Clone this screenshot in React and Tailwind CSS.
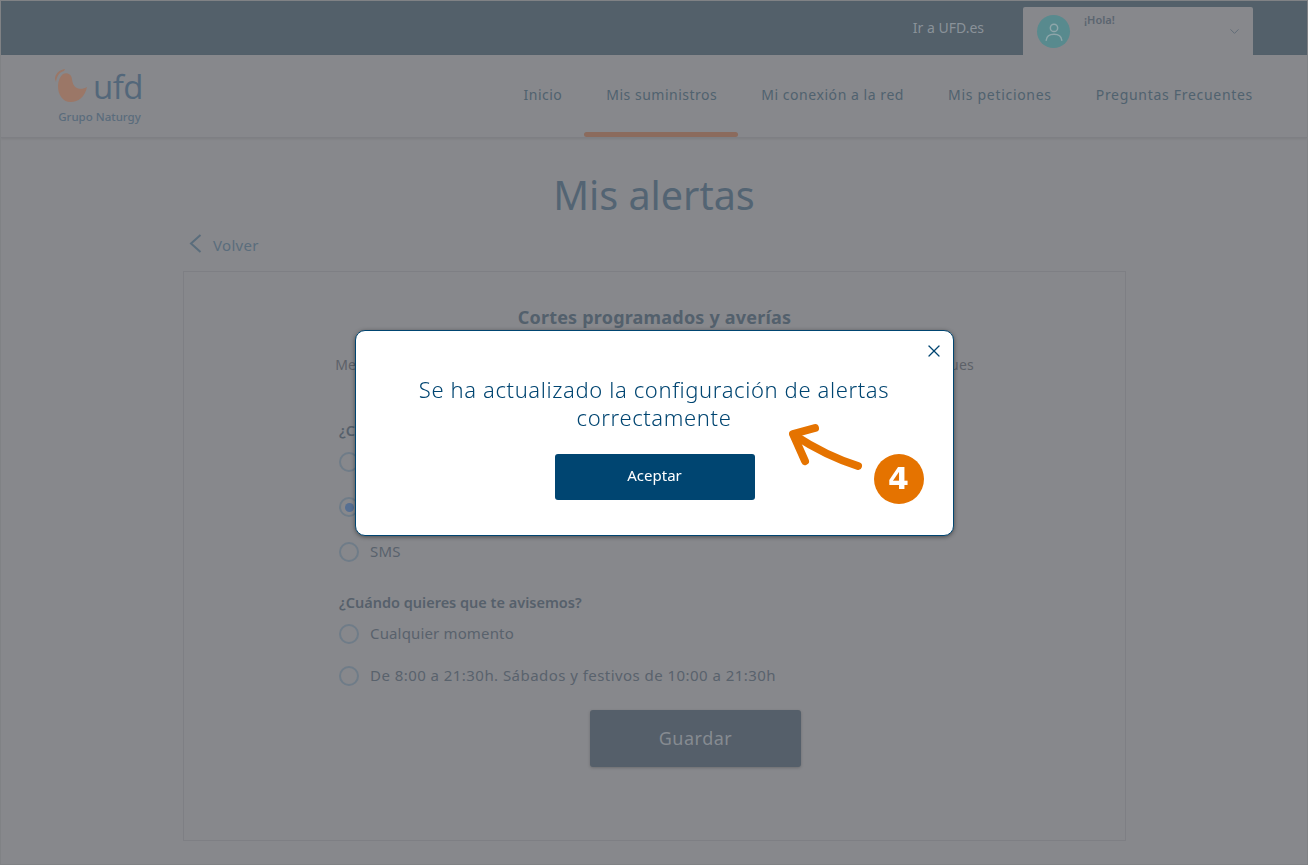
import React from 'react';
import { ChevronDown, X } from 'lucide-react';

const NAV_ITEMS = [
  { label: 'Inicio', tracking: 'tracking-[0.5px]' },
  { label: 'Mis suministros', tracking: 'tracking-[0.5px]', active: true },
  { label: 'Mi conexión a la red', tracking: 'tracking-[0.55px]' },
  { label: 'Mis peticiones', tracking: 'tracking-[0.7px]' },
  { label: 'Preguntas Frecuentes', tracking: 'tracking-[0.7px]' },
];

function Radio({ label, checked, tracking = 'tracking-[0.15px]', className = '' }) {
  return (
    <div className={`flex items-center gap-[11px] h-5 ${className}`}>
      <span className="w-5 h-5 rounded-full border-2 border-[#6f7c88] flex items-center justify-center shrink-0">
        {checked && <span className="w-[9px] h-[9px] rounded-full bg-[#566f92]" />}
      </span>
      <span className={`text-[15px] pb-[2px] text-[#59626c] ${tracking}`}>{label}</span>
    </div>
  );
}

function Logo() {
  return (
    <div className="w-[90px] flex flex-col items-center">
      <div className="flex items-center h-[38px] w-[90px]">
        <svg width="38" height="38" viewBox="0 0 38 38" className="shrink-0">
          <path d="M9 6 C12 4.500 16 5 17.500 9 C18.500 13 18.500 17 22 19.500 C25 21.500 30 21 33 19 C31 29 24 34 17 34 C8 34 4 26 4 18 C4 13 6 8.500 9 6 Z" fill="#9b7767" />
          <path d="M1 11 C1 6 5 2 11 1 L10 3 C6 4 3 7 2 14 Z" fill="#9b7767" />
        </svg>
        <span className="text-[33px] leading-[34px] font-medium text-[#53677a] font-['Open_Sans',sans-serif] ml-[1px] tracking-[-0.5px]">ufd</span>
      </div>
      <span className="text-[11.5px] leading-[14px] mt-[4px] ml-[1px] font-medium text-[#5a6c7c] whitespace-nowrap">Grupo Naturgy</span>
    </div>
  );
}

function Header() {
  return (
    <>
      <div className="h-[54px] bg-[#53606a] flex justify-end pr-[54px] shrink-0">
        <a className="text-[14px] text-[#8a9299] mt-[16px] mr-[39px]">Ir a UFD.es</a>
        <div className="w-[230px] h-[48px] mt-[6px] bg-[#87888c] rounded-t-[2px] flex pl-[14px] pr-[11px] relative">
          <div className="w-[33px] h-[33px] rounded-full bg-[#588a8e] mt-[8px] flex items-center justify-center">
            <svg width="22" height="22" viewBox="0 0 24 24" fill="none" stroke="#8ea6aa" strokeWidth="1.6" strokeLinecap="round">
              <circle cx="12" cy="7.500" r="4" />
              <path d="M3.500 21 C4 16.500 7 14.500 12 14.500 C17 14.500 20 16.500 20.500 21" />
            </svg>
          </div>
          <span className="text-[11px] leading-4 font-semibold text-[#5b6570] ml-[14px] mt-[5px]">¡Hola!</span>
          <ChevronDown size={15} strokeWidth={1.5} className="text-[#5f6b76] ml-auto mt-[17px]" />
        </div>
      </div>
      <div className="h-[83px] bg-[#87888c] border-b border-[#7e7f84] shadow-[0_1px_2px_rgba(0,0,0,0.08)] flex justify-between pl-[53px] pr-[54px] shrink-0">
        <div className="mt-[13px]"><Logo /></div>
        <nav className="flex gap-[44px]">
          {NAV_ITEMS.map((item) => (
            <div key={item.label} className={`relative pt-[30px] text-[14px] leading-5 text-[#50626f] whitespace-nowrap ${item.tracking}`}>
              {item.label}
              {item.active && <span className="absolute -left-[22px] -right-[21px] top-[77px] h-[5px] rounded-full bg-[#8b6b5d]" />}
            </div>
          ))}
        </nav>
      </div>
    </>
  );
}

function AlertsForm() {
  return (
    <div className="ml-[182px] w-[943px] mt-[16px] h-[570px] border border-[#7e7f84] flex flex-col">
      <h2 className="text-[18px] leading-6 font-bold tracking-[0.2px] text-[#53606c] text-center mt-[33px]">Cortes programados y averías</h2>
      <p className="text-[14px] leading-5 tracking-[0.17px] text-[#5d6168] text-center mt-[26px] whitespace-nowrap">
        Mensajes de aviso sobre cortes programados y averías que afectan a tus suministros y bloques
      </p>
      <div className="pl-[155px] mt-[45px] flex flex-col">
        <p className="text-[14.5px] leading-5 font-semibold text-[#56606b]">¿Cómo quieres que te avisemos?</p>
        <Radio label="Email" className="mt-[12px]" />
        <Radio label="Email y SMS" checked className="mt-[25px]" />
        <Radio label="SMS" className="mt-[25px]" />
        <p className="text-[14.5px] leading-5 font-semibold text-[#56606b] mt-[30px]">¿Cuándo quieres que te avisemos?</p>
        <Radio label="Cualquier momento" className="mt-[12px]" />
        <Radio
          label="De 8:00 a 21:30h. Sábados y festivos de 10:00 a 21:30h"
          tracking="tracking-[0.45px]"
          className="mt-[22px]"
        />
      </div>
      <button className="w-[211px] h-[57px] ml-[406px] mt-[24px] pb-[1px] rounded-[3px] bg-[#555f6a] text-[#868b91] text-[18px] tracking-[0.5px] shadow-[0_1px_3px_rgba(0,0,0,0.2)]">
        Guardar
      </button>
    </div>
  );
}

function SuccessModal() {
  return (
    <div className="fixed inset-0 flex items-center justify-center">
      <div className="relative w-[599px] h-[206px] bg-white rounded-[10px] border border-[#004571] shadow-[0_1px_4px_rgba(0,0,0,0.45)] flex flex-col items-center">
        <button className="absolute right-[9px] top-[10px] text-[#004571]">
          <X size={20} strokeWidth={1.5} />
        </button>
        <p className="w-[500px] mt-[44px] text-[22px] leading-[28px] font-light tracking-[0.62px] text-[#004571] text-center">
          Se ha actualizado la configuración de alertas correctamente
        </p>
        <button className="w-[200px] h-[46px] mt-[23px] ml-[1px] pb-[2px] rounded-[3px] bg-[#004571] text-white text-[15px]">Aceptar</button>

        {/* callout from the help article */}
        <svg className="absolute left-[428px] top-[88px]" width="80" height="60" viewBox="0 0 80 60" fill="none" stroke="#e57300" strokeWidth="8" strokeLinecap="round" strokeLinejoin="round">
          <path d="M74 47 C55 41 36 33 10 16" />
          <path d="M31 9 L9 15 L21 42" />
        </svg>
        <span className="absolute left-[518px] top-[123px] w-[50px] h-[50px] rounded-full bg-[#e57300] text-white flex items-center justify-center text-[30px] font-bold font-['DejaVu_Sans',sans-serif]">
          4
        </span>
      </div>
    </div>
  );
}

export default function App() {
  return (
    <div className="relative h-[865px] overflow-hidden border border-[#808285] bg-[#87888c] flex flex-col font-['Noto_Sans',sans-serif]">
      <Header />
      <main className="flex flex-col">
        <h1 className="text-[39.5px] leading-[50px] text-[#536473] text-center mt-[32px]">Mis alertas</h1>
        <div className="flex items-center h-5 mt-[15px] ml-[188px] text-[#5a6d7c]">
          <svg width="13" height="19" viewBox="0 0 13 19" fill="none" stroke="currentColor" strokeWidth="2" className="-mt-[4px]">
            <path d="M11.500 1 L2 9.500 L11.500 18" />
          </svg>
          <span className="text-[15px] ml-[11px] mt-[1px] tracking-[0.3px]">Volver</span>
        </div>
        <AlertsForm />
      </main>
      <SuccessModal />
    </div>
  );
}
